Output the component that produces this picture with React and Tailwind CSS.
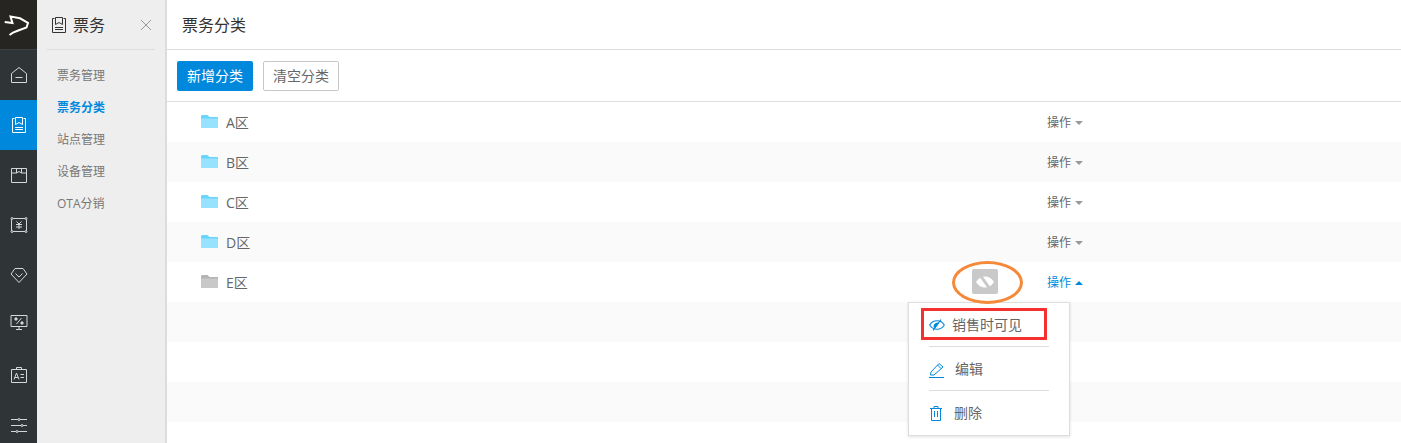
const font = { fontFamily: '"Open Sans", "Noto Sans CJK SC", sans-serif' };

function RailIcon({ children, active }) {
  return (
    <div className={`h-[50px] flex items-center justify-center ${active ? "bg-[#0089dc]" : ""}`}>
      <svg width="18" height="18" viewBox="0 0 18 18" fill="none" stroke={active ? "#ffffff" : "#d5d8d8"} strokeWidth="1">
        {children}
      </svg>
    </div>
  );
}

function TicketIcon() {
  return (
    <>
      <path d="M4.500 2.500H2.500V16.500H15.500V2.500H13.500" />
      <path d="M5.500 1.500H12.500V8.500L9 6.500L5.500 8.500Z" />
      <path d="M5 11.500H13M5 13.500H13" />
    </>
  );
}

function Folder({ color, tab }) {
  return (
    <svg width="17" height="13" viewBox="0 0 17 13">
      <path d="M0 1.500C0 .7.7 0 1.500 0H6.500L8.500 2H17V13H0Z" fill={tab} />
      <path d="M0 3.500H17V13H0Z" fill={color} />
    </svg>
  );
}

function Caret({ up }) {
  return (
    <svg width="8" height="4" viewBox="0 0 8 4" className="ml-1">
      <path d={up ? "M0 4L4 0L8 4Z" : "M0 0L8 0L4 4Z"} fill={up ? "#0089dc" : "#999999"} />
    </svg>
  );
}

const rows = [
  { name: "A区" },
  { name: "B区" },
  { name: "C区" },
  { name: "D区" },
  { name: "E区", hidden: true },
  {},
  {},
  {},
];

const menu = ["票务管理", "票务分类", "站点管理", "设备管理", "OTA分销"];

function Row({ row, index }) {
  return (
    <div className={`h-10 relative flex items-center ${index % 2 ? "bg-[#fafafa]" : "bg-white"}`}>
      {row.name && (
        <>
          <div className="ml-[34px] w-[25px] flex -mt-[2px]">
            <Folder color={row.hidden ? "#c8c8c8" : "#97e2ff"} tab={row.hidden ? "#b4b4b4" : "#6cd3fb"} />
          </div>
          <span className="text-[14px] text-[#666666]">{row.name}</span>
          {row.hidden && (
            <div className="absolute left-[805px] top-[7px] w-[26px] h-[25px] rounded-[2px] bg-[#c9c9c9] flex items-center justify-center">
              <svg width="18" height="14" viewBox="0 0 18 14">
                <path d="M0 7C2.500 3.200 5.500 1.500 9 1.500C12.500 1.500 15.500 3.200 18 7C15.500 10.800 12.500 12.500 9 12.500C5.500 12.500 2.500 10.800 0 7Z" fill="#ffffff" />
                <path d="M4 0L14 14" stroke="#c9c9c9" strokeWidth="3" />
              </svg>
            </div>
          )}
          <div className={`absolute left-[880px] top-[12px] flex items-center text-[12px] ${row.hidden ? "text-[#0089dc]" : "text-[#666666]"}`}>
            操作
            <Caret up={row.hidden} />
          </div>
        </>
      )}
    </div>
  );
}

function Dropdown() {
  return (
    <div className="absolute left-[741px] top-[200px] w-[162px] h-[134px] bg-white border border-[#dddddd] shadow-[0_1px_3px_rgba(0,0,0,0.12)] text-[14px] text-[#666666] px-[20px]">
      <div className="h-[44px] flex items-center border-b border-[#dddddd]">
        <svg width="16" height="12" viewBox="0 0 16 12" fill="none" stroke="#0089dc" strokeWidth="1.100">
          <path d="M.7 6C2.500 3 5 1.800 8 1.800S13.500 3 15.300 6C13.500 9 11 10.200 8 10.200S2.500 9 .7 6Z" />
          <path d="M4.500 7.500C4.500 4.500 7.500 3 10.500 3.500L6 9.500Z" fill="#0089dc" stroke="none" />
          <path d="M12 .5L4 11.500" />
        </svg>
        <span className="ml-[7px] whitespace-nowrap">销售时可见</span>
      </div>
      <div className="h-[44px] flex items-center border-b border-[#dddddd]">
        <svg width="16" height="16" viewBox="0 0 16 16" fill="none" stroke="#0089dc" strokeWidth="1" className="mt-[2px]">
          <path d="M1.500 13L2 10L10 1.500L14 5L5 13Z" />
          <path d="M8.500 3L12 6.500" />
          <path d="M0 15.500H15" />
        </svg>
        <span className="ml-[10px]">编辑</span>
      </div>
      <div className="h-[43px] flex items-center">
        <svg width="14" height="16" viewBox="0 0 14 16" fill="none" stroke="#0089dc" strokeWidth="1">
          <path d="M1 3.500H13M5 3.500V1.500H9V3.500" />
          <path d="M2.500 3.500V15.500H11.500V3.500" />
          <path d="M5.500 6V12M8.500 6V12" />
        </svg>
        <span className="ml-[11px]">删除</span>
      </div>
    </div>
  );
}

export default function App() {
  return (
    <div className="flex h-[443px] w-[1401px] overflow-hidden bg-white" style={font}>
      {/* rail */}
      <div className="w-[37px] shrink-0 bg-[#2f3436]">
        <div className="h-[50px] bg-[#262522] border-b border-[#3d4143]">
          <svg width="37" height="49" viewBox="0 0 37 49" fill="none" stroke="#ffffff" strokeWidth="2">
            <path d="M4.700 22L12.500 23L10.500 16.500L20 18.300L28 23L26.500 27.500L18.300 30.500L13 32.700L9.500 35" />
          </svg>
        </div>
        <RailIcon>
          <path d="M1.500 7.500L9 1.500L16.500 7.500V16.500H1.500Z" />
          <path d="M5.500 11.500H12.500" />
        </RailIcon>
        <RailIcon active>
          <TicketIcon />
        </RailIcon>
        <RailIcon>
          <path d="M1.500 2.500H16.500V16.500H1.500Z" />
          <path d="M1.500 7H6.500V2.500M11.500 2.500V7H16.500M6.500 7L9 5.500L11.500 7" />
        </RailIcon>
        <RailIcon>
          <path d="M2 2.500H16M2 15.500H16M1.500 3V15M16.500 3V15" />
          <circle cx="2" cy="2.500" r="1" fill="#2f3436" />
          <circle cx="16" cy="2.500" r="1" fill="#2f3436" />
          <circle cx="2" cy="15.500" r="1" fill="#2f3436" />
          <circle cx="16" cy="15.500" r="1" fill="#2f3436" />
          <path d="M6.500 5.500L9 8L11.500 5.500M6 8.500H12M6 11H12M9 8V13" />
        </RailIcon>
        <RailIcon>
          <path d="M5 2.500H13L17 8L9 16.500L1 8Z" />
          <path d="M5.500 7.500L9 11L12.500 7.500" />
        </RailIcon>
        <div className="-mt-[3px]">
          <RailIcon>
            <path d="M1 2.500H17V13.500H1Z" />
            <path d="M6 16.500H12M9 13.500V16.500M11.500 5L6.500 11" />
            <circle cx="6" cy="6" r="1.200" fill="#d5d8d8" />
            <circle cx="12" cy="10" r="1.200" fill="#d5d8d8" />
          </RailIcon>
        </div>
        <div className="mt-[3px]">
          <RailIcon>
            <path d="M1.500 3.500H16.500V16.500H1.500Z" />
            <path d="M6.500 3.500V1.500H11.500V3.500" />
            <path d="M4 13.500L6.500 7L9 13.500M5 11.500H8M10.500 8.500H14M10.500 11.500H14" />
          </RailIcon>
        </div>
        <RailIcon>
          <path d="M1 3.500H17M1 9.500H17M1 15.500H17" />
          <circle cx="9" cy="3.500" r="1" fill="#2f3436" />
          <circle cx="12" cy="9.500" r="1" fill="#2f3436" />
          <circle cx="7" cy="15.500" r="1" fill="#2f3436" />
        </RailIcon>
      </div>

      {/* secondary menu */}
      <div className="w-[130px] shrink-0 bg-[#eeeeee] border-r-2 border-[#dcdcdc] px-[10px]">
        <div className="h-[50px] flex items-center border-b border-[#dddddd]">
          <svg width="18" height="18" viewBox="0 0 18 18" fill="none" stroke="#333333" strokeWidth="1" className="ml-[3px]">
            <TicketIcon />
          </svg>
          <span className="ml-[5px] text-[16px] text-[#333333]">票务</span>
          <svg width="12" height="12" viewBox="0 0 12 12" stroke="#999999" strokeWidth="1" className="ml-auto mr-[3px]">
            <path d="M1 1L11 11M11 1L1 11" />
          </svg>
        </div>
        <div className="pt-[10px] pl-[10px]">
          {menu.map((m, i) => (
            <div key={m} className={`h-8 flex items-center text-[12px] ${i === 1 ? "text-[#0089dc] font-bold" : "text-[#777777]"}`}>
              {m}
            </div>
          ))}
        </div>
      </div>

      {/* main */}
      <div className="flex-1 min-w-0">
        <div className="h-[50px] border-b border-[#dddddd] flex items-center pl-[15px] text-[16px] text-[#333333]">
          票务分类
        </div>
        <div className="h-[52px] border-b border-[#dddddd] flex items-center pl-[10px] gap-[10px] text-[14px]">
          <button className="w-[76px] h-[30px] rounded-[2px] bg-[#0089dc] text-white">新增分类</button>
          <button className="w-[76px] h-[30px] rounded-[2px] border border-[#c8c8c8] bg-white text-[#666666]">清空分类</button>
        </div>
        <div className="relative">
          {rows.map((row, i) => (
            <Row key={i} row={row} index={i} />
          ))}
          <Dropdown />
        </div>
      </div>

      {/* annotations drawn over the screenshot */}
      <div className="absolute left-[952px] top-[261px] w-[71px] h-[43px] rounded-[50%] border-[3px] border-[#f5893a]" />
      <div className="absolute left-[921px] top-[308px] w-[126px] h-[32px] border-[3px] border-[#f5312f]" />
    </div>
  );
}
